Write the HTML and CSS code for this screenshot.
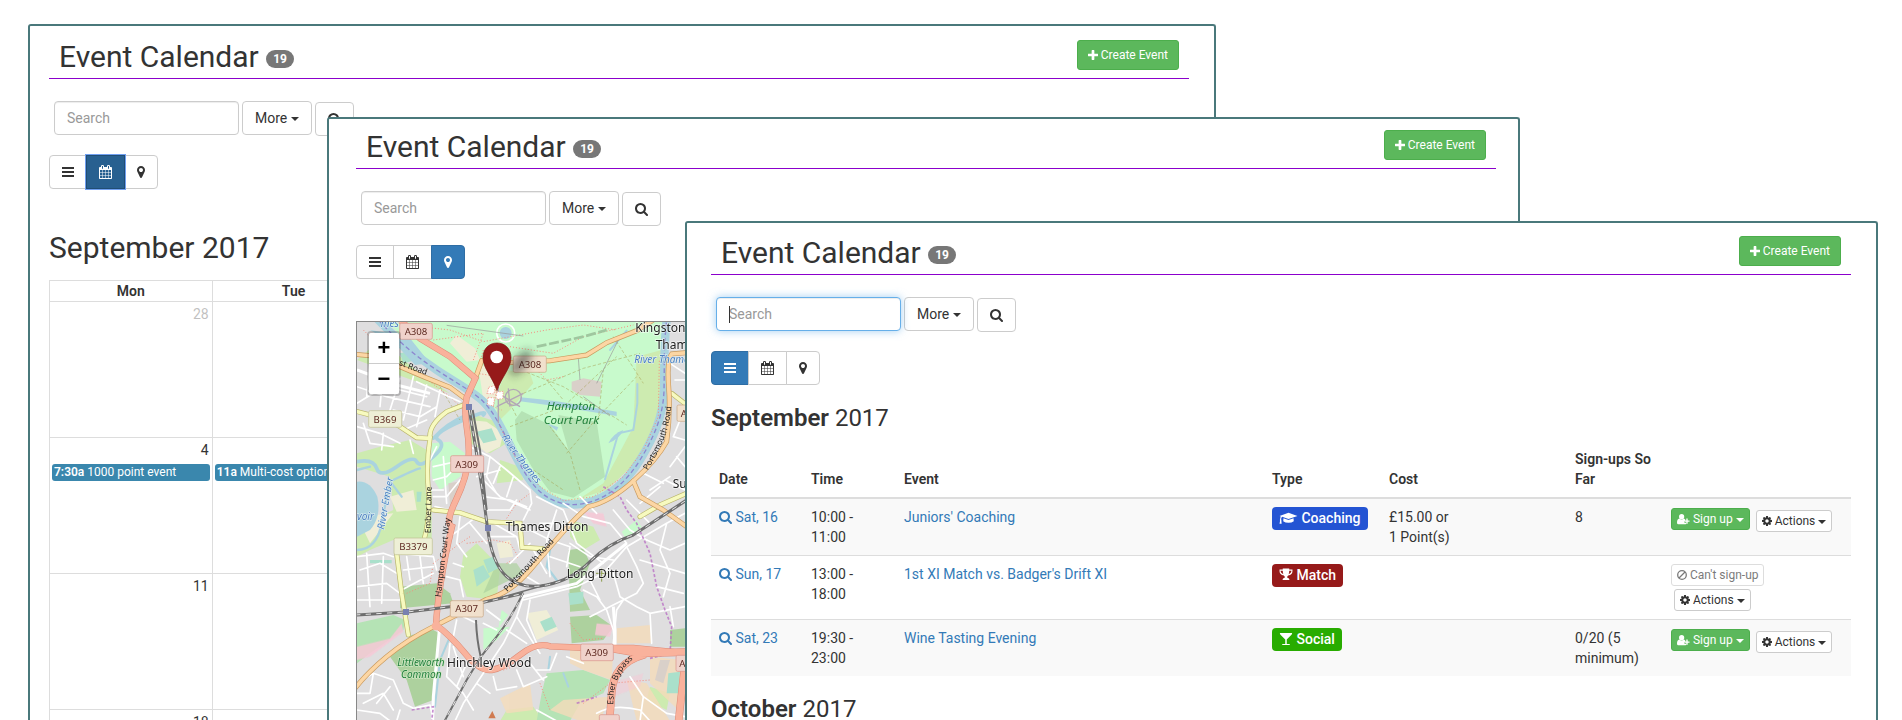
FILE: index.html
```html
<!DOCTYPE html>
<html lang="en">
<head>
<meta charset="utf-8">
<title>Event Calendar</title>
<link rel="stylesheet" href="styles.css">
</head>
<body>
<svg class="sprite" aria-hidden="true">
  <symbol id="i-search" viewBox="64 0 1664 1792"><path d="M1216 832q0-185-131.5-316.5t-316.5-131.5-316.5 131.5-131.5 316.5 131.5 316.5 316.5 131.5 316.5-131.5 131.5-316.5zm512 832q0 52-38 90t-90 38q-54 0-90-38l-343-342q-179 124-399 124-143 0-273.5-55.5t-225-150-150-225-55.5-273.5 55.5-273.5 150-225 225-150 273.5-55.5 273.5 55.5 225 150 150 225 55.5 273.5q0 220-124 399l343 343q37 37 37 90z"/></symbol>
  <symbol id="i-marker" viewBox="384 0 1024 1792"><path d="M1152 640q0-106-75-181t-181-75-181 75-75 181 75 181 181 75 181-75 75-181zm256 0q0 109-33 179l-364 774q-16 33-47.5 52t-67.5 19-67.5-19-46.5-52l-365-774q-33-70-33-179 0-212 150-362t362-150 362 150 150 362z"/></symbol>
  <symbol id="i-plus" viewBox="192 128 1408 1408"><path d="M1600 736v192q0 40-28 68t-68 28h-416v416q0 40-28 68t-68 28h-192q-40 0-68-28t-28-68v-416h-416q-40 0-68-28t-28-68v-192q0-40 28-68t68-28h416v-416q0-40 28-68t68-28h192q40 0 68 28t28 68v416h416q40 0 68 28t28 68z"/></symbol>
  <symbol id="i-bars" viewBox="0 0 12 14"><path d="M0 2h12v2H0zM0 6h12v2H0zM0 10h12v2H0z"/></symbol>
  <symbol id="i-calendar" viewBox="64 0 1664 1792"><path d="M192 1664h288v-288h-288v288zm352 0h320v-288h-320v288zm-352-352h288v-320h-288v320zm352 0h320v-320h-320v320zm-352-384h288v-288h-288v288zm736 736h320v-288h-320v288zm-384-736h320v-288h-320v288zm768 736h288v-288h-288v288zm-384-352h320v-320h-320v320zm-352-864v-288q0-13-9.5-22.5t-22.5-9.5h-64q-13 0-22.5 9.5t-9.5 22.5v288q0 13 9.5 22.5t22.5 9.5h64q13 0 22.5-9.5t9.5-22.5zm736 864h288v-320h-288v320zm-384-384h320v-288h-320v288zm384 0h288v-288h-288v288zm32-480v-288q0-13-9.5-22.5t-22.5-9.5h-64q-13 0-22.5 9.5t-9.5 22.5v288q0 13 9.5 22.5t22.5 9.5h64q13 0 22.5-9.5t9.5-22.5zm384-64v1280q0 52-38 90t-90 38h-1408q-52 0-90-38t-38-90v-1280q0-52 38-90t90-38h128v-96q0-66 47-113t113-47h64q66 0 113 47t47 113v96h384v-96q0-66 47-113t113-47h64q66 0 113 47t47 113v96h128q52 0 90 38t38 90z"/></symbol>
  <symbol id="i-cog" viewBox="128 128 1536 1536"><path d="M1152 896q0-106-75-181t-181-75-181 75-75 181 75 181 181 75 181-75 75-181zm512-109v222q0 12-8 23t-20 13l-185 28q-19 54-39 91 35 50 107 138 10 12 10 25t-9 23q-27 37-99 108t-94 71q-12 0-26-9l-138-108q-44 23-91 38-16 136-29 186-7 28-36 28h-222q-14 0-24.5-8.5t-11.5-21.5l-28-184q-49-16-90-37l-141 107q-10 9-25 9-14 0-25-11-126-114-165-168-7-10-7-23 0-12 8-23 15-21 51-66.5t54-70.5q-27-50-41-99l-183-27q-13-2-21-12.5t-8-23.5v-222q0-12 8-23t19-13l186-28q14-46 39-92-40-57-107-138-10-12-10-24 0-10 9-23 26-36 98.5-107.5t94.5-71.5q13 0 26 10l138 107q44-23 91-38 16-136 29-186 7-28 36-28h222q14 0 24.5 8.5t11.5 21.5l28 184q49 16 90 37l142-107q9-9 24-9 13 0 25 10 129 119 165 170 7 8 7 22 0 12-8 23-15 21-51 66.5t-54 70.5q26 50 41 98l183 28q13 2 21 12.5t8 23.5z"/></symbol>
  <symbol id="i-ban" viewBox="1 1 10 10"><g fill="none" stroke="currentColor" stroke-width="1.3"><circle cx="6" cy="6" r="4.3"/><path d="M3 9l6-6"/></g></symbol>
  <symbol id="i-userplus" viewBox="0 0 28 24"><circle cx="10" cy="7" r="5.6"/><path d="M5 11q5 4 10 0q2 .5 3 2.500v3h-2v3.500h4v2q-1 1.500-3 1.500H3q-3 0-3-3.500q0-8 5-9z"/><path d="M20 11h3v4h4v3h-4v4h-3v-4h-4v-3h4z"/></symbol>
  <symbol id="i-cap" viewBox="0 0 36 24"><path d="M18 2L35 8L18 14L6 9.800Q4 11 4 14.500Q5 16 4.500 17L5 23H1L2 17Q1 16 2.200 14.500Q2.300 11 3.500 9L1 8z"/><path d="M8.500 12.500L18 16L27.500 12.500L28 18Q24 21 18 21T8 18z"/></symbol>
  <symbol id="i-trophy" viewBox="0 0 26 26"><path d="M7 1h12v2h6v3q0 6-8 8q-2 1.500-2 4h1.500q3 1.500 3 4.500h-13q0-3 3-4.500H11q0-2.500-2-4q-8-2-8-8V3h6zM3 5v1q0 3 5 5.500Q7 8 7 5zM23 5h-4q0 3-1 6.500q5-2.500 5-5.500z" fill-rule="evenodd"/></symbol>
  <symbol id="i-glass" viewBox="0 0 28 26"><path d="M2 1h24q1 1.500-1 3.500L15.500 14v9H20q2 0 2 2H6q0-2 2-2h4.500v-9L3 4.500Q1 2.500 2 1z"/></symbol>
</svg>

<main class="desk">

  <section class="window window-month">
    <header class="bar">
      <h2 class="title">Event Calendar <span class="badge">19</span></h2>
      <button class="btn btn-create" type="button"><svg class="ico"><use href="#i-plus"/></svg> Create Event</button>
    </header>
    <form class="filters">
      <span class="field"><input class="search" type="text" placeholder="Search" aria-label="Search"></span>
      <button class="btn btn-default" type="button">More <span class="caret"></span></button>
      <button class="btn btn-default btn-find" type="button" aria-label="Find"><svg class="ico"><use href="#i-search"/></svg></button>
    </form>
    <div class="views">
      <button class="btn btn-default" type="button" aria-label="List"><svg class="ico ico-bars"><use href="#i-bars"/></svg></button>
      <button class="btn btn-default is-pressed" type="button" aria-label="Calendar"><svg class="ico"><use href="#i-calendar"/></svg></button>
      <button class="btn btn-default" type="button" aria-label="Map"><svg class="ico ico-pin"><use href="#i-marker"/></svg></button>
    </div>
    <h2 class="month-title">September 2017</h2>
    <table class="month">
      <thead><tr><th>Mon</th><th>Tue</th><th></th><th></th><th></th><th></th><th></th></tr></thead>
      <tbody>
        <tr><td><div class="day day-other">28</div></td><td></td><td></td><td></td><td></td><td></td><td></td></tr>
        <tr>
          <td><div class="day">4</div><a class="entry" href="#"><b>7:30a</b> 1000 point event</a></td>
          <td><div class="day">&nbsp;</div><a class="entry" href="#"><b>11a</b> Multi-cost option</a></td>
          <td></td><td></td><td></td><td></td><td></td>
        </tr>
        <tr><td><div class="day">11</div></td><td></td><td></td><td></td><td></td><td></td><td></td></tr>
        <tr><td><div class="day">18</div></td><td></td><td></td><td></td><td></td><td></td><td></td></tr>
      </tbody>
    </table>
  </section>

  <section class="window window-map">
    <header class="bar">
      <h2 class="title">Event Calendar <span class="badge">19</span></h2>
      <button class="btn btn-create" type="button"><svg class="ico"><use href="#i-plus"/></svg> Create Event</button>
    </header>
    <form class="filters">
      <span class="field"><input class="search" type="text" placeholder="Search" aria-label="Search"></span>
      <button class="btn btn-default" type="button">More <span class="caret"></span></button>
      <button class="btn btn-default btn-find" type="button" aria-label="Find"><svg class="ico"><use href="#i-search"/></svg></button>
    </form>
    <div class="views">
      <button class="btn btn-default" type="button" aria-label="List"><svg class="ico ico-bars"><use href="#i-bars"/></svg></button>
      <button class="btn btn-default" type="button" aria-label="Calendar"><svg class="ico"><use href="#i-calendar"/></svg></button>
      <button class="btn btn-default is-active" type="button" aria-label="Map"><svg class="ico ico-pin"><use href="#i-marker"/></svg></button>
    </div>
    <div class="map">
      <svg class="tiles" viewBox="21 36 984 1197" role="img" aria-label="Street map">
        <defs>
          <filter id="soft" x="-80%" y="-80%" width="260%" height="260%"><feGaussianBlur stdDeviation="12"/></filter>
          <path id="p-ports" d="M893 482C925 425 955 380 964 290"/>
          <path id="p-esher" d="M790 1184C790 1130 800 1090 846 1050"/>
          <path id="p-thames" d="M455 380C480 425 515 470 580 545"/>
          <path id="t-thames" d="M85 30C150 100 200 140 260 180S370 245 400 275S450 345 490 425S560 545 600 566S680 590 730 573S830 515 870 450S940 320 942 240S940 120 950 30"/>
          <path id="t-a309" d="M150 30L210 85L300 140L376 205L350 262Q342 300 350 350T356 440Q352 500 318 570T306 650Q284 740 272 820T258 945Q300 975 345 1030T425 1080T510 1035T600 1009L720 1014H850L1010 1030"/>
          <path id="t-a307" d="M1010 128L965 132Q950 150 956 230T950 395Q920 450 850 513T715 590Q680 620 640 665T540 780T410 868Q330 910 250 950T110 1040T15 1135"/>
          <path id="t-yellow" d="M15 303L110 328L150 350L200 383L240 385Q228 460 235 540T222 690M240 385Q235 345 290 305L345 283M140 730L155 850L175 975M250 600L330 608L410 635L510 640L516 712L580 716M965 250L1010 285M1010 550L930 585L870 620"/>
          <path id="t-orange" d="M15 133L70 138L150 170L220 200L300 232L348 268M376 205L395 152M470 158L600 152L710 135L770 98L860 62L910 30M850 513L870 560L940 600L1010 650"/>
          <path id="t-bypass" d="M780 1015L870 1030L1010 1026M880 1035Q790 1060 785 1150L778 1240M1005 1060L985 1240"/>
        </defs>
        <rect x="21" y="36" width="984" height="1197" fill="#dfdedf"/>

        <g fill="#c8facc">
          <path d="M110 36H945V260Q940 360 860 450T700 585Q620 580 560 530T440 330L345 240L250 170z"/>
          <path d="M245 400L300 395L345 430L330 500L270 540L245 500z"/>
          <path d="M400 955L480 950L440 990L400 1020zM455 900L475 915L445 955zM815 665L860 630L875 650L830 690z"/>
        </g>
        <g fill="#cdebb0">
          <path d="M860 140L935 120V290Q925 370 860 455L770 540L690 565L760 520L850 350z"/>
          <path d="M21 150L90 90L210 190L300 250L200 215z"/>
          <path d="M90 410L180 390L230 420L225 600H130L120 500L21 470V430z"/>
          <path d="M21 650L130 600L245 540V690L130 690L60 720L21 740z"/>
          <path d="M360 310L455 340L470 400L420 430L360 400z"/>
          <path d="M470 180L540 190L550 220L480 300L440 340L445 240z"/>
          <path d="M340 735L380 700L450 770L440 870L350 860L330 800z"/>
          <path d="M660 630L730 650L750 690L700 720L660 680zM450 450L510 470L520 510L440 520z"/>
          <path d="M900 1130L960 1150L950 1200L890 1170zM470 1200L550 1190L580 1233H450z"/>
        </g>
        <g fill="#b5e3b5">
          <path d="M495 330L515 303L600 345L655 420L625 315L740 335L765 500L670 563L600 545L545 470L500 390z"/>
          <path d="M590 1090L700 1080L780 1110L760 1150L690 1180L660 1233H560L575 1150z"/>
          <path d="M21 940L130 915L165 930L160 960L60 1030L21 1060z"/>
        </g>
        <g fill="#add19e">
          <path d="M120 1040L185 975L250 960L268 970L250 1170L195 1190L170 1110z"/>
          <path d="M150 830L260 820L300 850L310 880L150 895z"/>
          <path d="M660 920L740 915L790 950L760 990L665 1000zM960 960L1005 955V1010H960z"/>
          <path d="M655 720L700 715L720 760L690 840L720 900L660 905z"/>
          <path d="M400 850L520 790L500 760L440 760z" opacity=".7"/>
        </g>
        <g fill="#f5dcba" opacity=".8">
          <path d="M660 1010H790L785 1110L700 1080L660 1060zM800 955L900 945L905 1000H800z"/>
          <path d="M450 1165L540 1120L550 1200L470 1210zM640 1170L780 1160L750 1233H690L600 1200z"/>
          <path d="M900 1040L1000 1050L985 1200L900 1120zM830 1110L890 1120L960 1233H860z"/>
        </g>
        <g fill="#f0eed7">
          <path d="M300 100L320 75L375 115L390 150L350 155z"/>
          <path d="M360 330L410 335L460 370L450 410L410 430L375 400zM120 560L190 540L200 600L140 605z"/>
          <path d="M440 700L480 690L490 740L450 745zM530 910L590 900L625 960L560 990zM21 620L130 610L60 700z"/>
          <path d="M385 170L430 160L440 260L400 270z"/>
        </g>
        <g fill="#aae0cb">
          <path d="M370 780L400 765L420 800L380 830zM400 750L430 740L445 775L415 790zM655 850L700 845L700 880L660 885z"/>
          <path d="M570 935L605 920L620 950L585 965zM60 750H125V760H60zM955 1090L990 1085L985 1150H950z"/>
          <path d="M150 130L195 120L200 150L160 160zM380 365L425 355L440 390L400 400zM200 545L215 545L212 575H200z"/>
        </g>
        <g fill="#d9d0c9">
          <path d="M665 215L700 205L755 215L750 260L690 255L665 240zM295 520L325 515L320 570L300 585zM930 1050L960 1050L940 1120L915 1110z"/>
        </g>
        <g fill="#f7c8d6" opacity=".85">
          <path d="M21 1010L120 985L155 940L160 965L60 1040L21 1050zM700 605L760 610L770 650L730 640zM740 940L790 945L780 980L735 975z"/>
          <path d="M780 1120L880 1090L870 1130L790 1160z" opacity=".6"/>
        </g>

        <g fill="#aad3df">
          <path d="M100 50L180 85L240 160L195 165L130 95zM120 70L60 60L150 110z"/>
          <path d="M21 515Q60 510 82 560Q95 620 60 660L21 680z"/>
          <circle cx="467" cy="69" r="27" fill="#c8facc" stroke="#fff" stroke-width="5"/><circle cx="467" cy="69" r="18"/>
          <path d="M775 400Q790 370 820 360Q810 385 775 400zM510 262L570 268L630 275L800 305V318L630 290L510 274zM590 340L625 352L620 362z"/>
        </g>
        <g fill="none" stroke="#aad3df" stroke-linecap="round">
          <use href="#t-thames" stroke-width="25"/>
          <path d="M21 455Q70 445 80 475T140 470T200 455T250 440T265 390T330 335T400 315" stroke-width="11"/>
          <path d="M250 385Q290 340 350 315" stroke-width="10"/>
          <path d="M21 480L60 470M130 510Q190 480 210 475M120 515Q110 560 95 640T21 720M600 720L590 770L620 810M155 560L125 520" stroke-width="7"/>
          <path d="M862 222V280L850 360L805 370L765 508M830 62L780 120" stroke-width="6"/>
          <path d="M300 980L270 1050L255 1190M640 1090L655 1130M600 1040L595 1080" stroke-width="6"/>
        </g>
        <use href="#t-thames" fill="none" stroke="#8d86cf" stroke-width="4" stroke-dasharray="14 9"/>

        <g fill="none" stroke="#a59f4e" stroke-width="2" stroke-dasharray="10 6" opacity=".75">
          <path d="M500 175L640 230L790 320L830 345M520 250L700 175L870 130M480 350L640 290L800 140M650 430L745 320L860 200M690 540L660 430L600 350M550 480L640 540"/>
          <path d="M790 80L880 220M590 210L640 270M745 330L760 180M270 230L330 330M480 280L500 320"/>
        </g>
        <g fill="none" stroke="#f58a7c" stroke-width="3" stroke-dasharray="3 6">
          <path d="M210 50L300 60L400 95L590 60L700 45L800 60M250 90L400 70L370 150M400 120L380 190L450 200M480 110L610 130L700 80L850 45"/>
          <path d="M450 350L500 450L570 530L640 572L730 560L820 500L880 420L925 320L928 150"/>
          <path d="M40 60L130 150L220 200L300 260L370 330M460 640L500 580L540 550M350 700L430 690L480 700L505 740L470 760"/>
          <path d="M170 850L240 820L250 760L330 700L360 680M570 1120L600 1200M410 1060L460 1080L520 1060M660 940L700 990L760 985M700 1180L780 1120L900 1110"/>
          <path d="M560 180L590 210L640 200M410 250L440 240L430 290L455 300"/>
        </g>
        <g fill="none" stroke="#999" stroke-width="2">
          <path d="M290 46L520 78M685 145L690 210M780 318L700 260M810 80L740 220"/>
        </g>
        <path d="M560 110L700 80L770 60" fill="none" stroke="#9fc79f" stroke-width="8" stroke-dasharray="30 8"/>

        <g fill="none" stroke="#fff" stroke-width="5" stroke-linejoin="round" stroke-linecap="round">
          <path d="M21 180L80 200L150 240L230 260M60 160L50 260M100 180L90 290M150 205L120 300M190 200L160 330M230 225L200 350M21 230L110 260L240 290M21 280L70 250M130 300L210 320L260 290M270 240L255 320M200 215L330 275"/>
          <path d="M21 350L90 370L150 400M40 340L60 400M100 370L95 420M160 360L230 330M180 390L190 430M60 400L130 410"/>
          <path d="M260 410L240 450M250 470L340 450M250 510L290 500L310 480M250 560L290 560L330 510M255 590L300 600M280 440L290 580M245 540H280"/>
          <path d="M360 410L420 440L470 480L540 540L545 580L520 630M380 430L390 500L450 560L540 600M400 560L480 570L530 590M420 440L410 500L440 550M450 470L430 520M490 500L470 560M380 500L450 480M410 600H480L500 570"/>
          <path d="M21 740L100 730L130 740M30 780L90 760L140 790M21 830L110 820L150 850M50 730L60 890M100 740L95 880M21 870L150 870M150 730L250 740L260 780M160 780L250 770M170 740L180 810M210 740L220 820M155 840L250 790"/>
          <path d="M300 680L380 620M330 620L320 700L350 740M310 760L340 770M360 640L410 700M290 800L330 810L340 860M430 640L500 680L510 720M420 680H500M540 660L600 690M480 760L540 700M550 720L590 790M530 800L580 830"/>
          <path d="M560 560L640 600L680 700L760 760M620 600L590 690L600 800M640 580L700 620L780 640L830 700M690 560L740 610M660 700L720 740L790 750M600 740L690 770M600 690L660 710L650 770M570 640L620 640"/>
          <path d="M520 870L600 850L680 830L760 790L830 710L950 640L1005 610M830 710L860 770L880 820L860 850L800 880L720 920M700 840L740 860L770 900L790 960L795 1010M720 810L750 870M790 790L810 860L860 890L900 910L1005 890M950 640L930 720L960 790L940 860M890 690L960 720L1005 700M870 750L1005 790M920 830L1000 850M900 910L905 1000M960 890L970 950M790 1000L800 900L820 870"/>
          <path d="M520 860L500 920L460 1000L400 1090L340 1180L315 1233M540 870L530 930L560 1000M500 920L570 1030M470 960L530 1000M320 930L310 980M340 920L380 940M300 1000L290 1100L340 1150L370 1200M310 1010L340 1100M350 1060L320 1130M430 1100L440 1140L500 1130M380 1120L420 1150M500 1080L520 1130L590 1100M540 1060L580 1110M620 1030L600 1080L560 1080M410 900L450 930M400 940L440 960"/>
          <path d="M21 1120L70 1090L130 1110L160 1180L190 1195M40 1180L100 1150L130 1200M21 1200L90 1210L120 1233M70 1090L60 1150L21 1150M190 1195L240 1185L250 1233M120 1130L80 1180M150 1200L140 1233"/>
          <path d="M960 470L1005 410M945 510L1005 540M900 540L960 500M990 330L970 380L1005 390M960 160L1005 190M975 210H1005M980 440L1005 470M870 580L930 530M880 490L940 520M790 600L840 660L890 690M830 570L900 640"/>
          <path d="M560 1200L620 1233M840 1100L880 1160L950 1210L1005 1220M880 1160L870 1233M740 1210Q790 1180 870 1200L900 1233M650 1040L700 1060"/>
        </g>
        <g fill="none" stroke="#fff" stroke-width="9">
          <path d="M268 960L250 1160L248 1233M520 860L680 820L830 700M795 1010V960L790 890M21 180L140 225L240 250"/>
        </g>
        <g fill="none" stroke="#b970c4" stroke-width="5" stroke-dasharray="9 6" opacity=".8">
          <path d="M760 530L810 560L830 600L860 640L900 730L920 830L945 900L965 950L960 1030L900 1045M185 1200L250 1190L245 1233M680 1180L740 1160"/>
        </g>

        <g fill="none" stroke-linecap="round">
          <use href="#t-yellow" stroke="#b9b56a" stroke-width="15"/>
          <use href="#t-yellow" stroke="#f7fabf" stroke-width="11"/>
          <g stroke="#c99a5e" stroke-width="15"><use href="#t-a307"/><use href="#t-orange"/></g>
          <g stroke="#fcd6a4" stroke-width="11"><use href="#t-a307"/><use href="#t-orange"/></g>
          <g stroke="#dd8a76"><use href="#t-a309" stroke-width="19"/><use href="#t-bypass" stroke-width="23"/></g>
          <g stroke="#f9b29c"><use href="#t-a309" stroke-width="16"/><use href="#t-bypass" stroke-width="20"/></g>
        </g>
        <circle cx="258" cy="948" r="13" fill="#f9b29c"/>

        <g fill="none" stroke="#6e6e6e">
          <path d="M358 300L378 420L400 560L412 650Q425 760 470 800T590 825T720 755T850 675L1010 570M15 915L180 905L300 890L400 877L520 850" stroke-width="9"/>
          <path d="M368 300L390 420L410 600M520 848Q480 930 440 980T390 1045L350 1110L280 1240M378 930Q380 990 392 1040" stroke-width="6"/>
          <path d="M400 877L640 810" stroke-width="4"/>
        </g>
        <g fill="none" stroke="#e6e6e6" stroke-width="3" stroke-dasharray="16 16">
          <path d="M358 300L378 420L400 560L412 650Q425 760 470 800T590 825T720 755T850 675L1010 570M15 915L180 905L300 890L400 877L520 850M520 848Q480 930 440 980T390 1045L350 1110L280 1240"/>
        </g>
        <g fill="#7981b0">
          <path d="M348 282h18v18h-18zM405 645h18v18h-18zM159 897h18v18h-18z"/>
        </g>
        <g fill="none" stroke="#b2a6b6" stroke-width="4">
          <circle cx="490" cy="262" r="24"/><path d="M440 290L520 250M445 250L510 290M475 235L480 290M445 230V340"/>
        </g>
        <g fill="#fff" stroke="#f2a497" stroke-width="3" stroke-dasharray="4 4">
          <path d="M416 232L436 226L432 252L412 250zM440 246L460 244L458 266L438 268zM414 262L434 264L430 288L412 284z"/>
        </g>
        <path d="M415 1225l12-22l10 22z" fill="#d07a50"/>
        <path d="M755 775v40M738 790h34" stroke="#8a9a4a" stroke-width="3"/>

        <g stroke-width="2">
          <g fill="#f0d2cb" stroke="#d9938a"><rect x="149" y="40" width="98" height="48" rx="5"/><rect x="302" y="437" width="99" height="50" rx="5"/><rect x="692" y="1002" width="98" height="50" rx="5"/><rect x="978" y="1036" width="98" height="48" rx="5"/><rect x="748" y="1214" width="60" height="48" rx="5"/></g>
          <g fill="#f1e0cc" stroke="#c9a684"><rect x="490" y="138" width="99" height="49" rx="5"/><rect x="301" y="872" width="99" height="49" rx="5"/><rect x="981" y="285" width="98" height="49" rx="5"/></g>
          <g fill="#eeefd6" stroke="#bfc092"><rect x="56" y="302" width="99" height="50" rx="5"/><rect x="132" y="684" width="115" height="50" rx="5"/></g>
        </g>
        <g class="shield-text">
          <text x="198" y="76">A308</text><text x="540" y="173">A308</text><text x="350" y="473">A309</text><text x="350" y="907">A307</text><text x="740" y="1037">A309</text>
          <text x="105" y="338">B369</text><text x="190" y="720">B3379</text><text x="1026" y="320">A307</text><text x="1022" y="1070">A309</text>
        </g>
        <g class="place">
          <text x="856" y="66">Kingston</text><text x="917" y="117">Thames</text>
          <text x="467" y="662">Thames Ditton</text><text x="650" y="803">Long Ditton</text><text x="291" y="1072">Hinchley Wood</text><text x="968" y="535">Surbiton</text>
        </g>
        <g class="green">
          <text x="663" y="300">Hampton</text><text x="664" y="343">Court Park</text>
          <g class="green-sm"><text x="213" y="1067">Littleworth</text><text x="214" y="1104">Common</text></g>
        </g>
        <g class="water">
          <text x="853" y="160">River Thames</text><text x="92" y="52">mes</text><text x="21" y="630">voir</text>
          <text><textPath href="#p-thames">River Thames</textPath></text>
          <text transform="translate(102 660) rotate(-80)">River Ember</text>
        </g>
        <g class="road">
          <text><textPath href="#p-ports">Portsmouth Road</textPath></text>
          <text><textPath href="#p-esher">Esher Bypass</textPath></text>
          <text transform="translate(472 846) rotate(-47)">Portsmouth Road</text>
          <text transform="translate(272 862) rotate(-83)">Hampton Court Way</text>
          <text transform="translate(242 670) rotate(-89)">Ember Lane</text>
          <text transform="translate(146 165) rotate(20)">st Road</text>
        </g>

        <ellipse cx="512" cy="158" rx="46" ry="20" transform="rotate(-50 512 158)" fill="#222" opacity=".5" filter="url(#soft)"/>
        <path d="M441 99C465 99 483 116 483 143C483 175 455 200 441 242C427 200 399 175 399 143C399 116 417 99 441 99z" fill="#961a1a" stroke="#7d1414" stroke-width="2"/>
        <circle cx="440" cy="141" r="19" fill="#fff"/>
      </svg>
      <div class="zoom">
        <button class="zoom-btn" type="button" aria-label="Zoom in">+</button>
        <button class="zoom-btn" type="button" aria-label="Zoom out">−</button>
      </div>
    </div>
  </section>

  <section class="window window-list">
    <header class="bar">
      <h2 class="title">Event Calendar <span class="badge">19</span></h2>
      <button class="btn btn-create" type="button"><svg class="ico"><use href="#i-plus"/></svg> Create Event</button>
    </header>
    <form class="filters">
      <span class="field has-cursor"><input class="search is-focus" type="text" placeholder="Search" aria-label="Search"></span>
      <button class="btn btn-default" type="button">More <span class="caret"></span></button>
      <button class="btn btn-default btn-find" type="button" aria-label="Find"><svg class="ico"><use href="#i-search"/></svg></button>
    </form>
    <div class="views">
      <button class="btn btn-default is-active" type="button" aria-label="List"><svg class="ico ico-bars"><use href="#i-bars"/></svg></button>
      <button class="btn btn-default" type="button" aria-label="Calendar"><svg class="ico"><use href="#i-calendar"/></svg></button>
      <button class="btn btn-default" type="button" aria-label="Map"><svg class="ico ico-pin"><use href="#i-marker"/></svg></button>
    </div>
    <h3 class="group"><b>September</b> 2017</h3>
    <table class="events">
      <colgroup><col class="c-date"><col class="c-time"><col><col class="c-type"><col class="c-cost"><col class="c-count"><col class="c-act"></colgroup>
      <thead>
        <tr><th>Date</th><th>Time</th><th>Event</th><th>Type</th><th>Cost</th><th>Sign-ups So Far</th><th></th></tr>
      </thead>
      <tbody>
        <tr>
          <td><a href="#"><svg class="ico"><use href="#i-search"/></svg> Sat, 16</a></td>
          <td>10:00 -<br>11:00</td>
          <td><a href="#">Juniors' Coaching</a></td>
          <td><span class="tag tag-coaching"><svg class="ico ico-wide"><use href="#i-cap"/></svg> Coaching</span></td>
          <td>£15.00 or<br>1 Point(s)</td>
          <td>8</td>
          <td><div class="acts"><button class="btn btn-xs btn-signup" type="button"><svg class="ico ico-user"><use href="#i-userplus"/></svg> Sign up <span class="caret"></span></button><button class="btn btn-xs btn-default btn-actions" type="button"><svg class="ico"><use href="#i-cog"/></svg> Actions <span class="caret"></span></button></div></td>
        </tr>
        <tr>
          <td><a href="#"><svg class="ico"><use href="#i-search"/></svg> Sun, 17</a></td>
          <td>13:00 -<br>18:00</td>
          <td><a href="#">1st XI Match vs. Badger's Drift XI</a></td>
          <td><span class="tag tag-match"><svg class="ico"><use href="#i-trophy"/></svg> Match</span></td>
          <td></td>
          <td></td>
          <td><div class="acts"><button class="btn btn-xs btn-default" type="button" disabled><svg class="ico"><use href="#i-ban"/></svg> Can't sign-up</button><button class="btn btn-xs btn-default btn-actions" type="button"><svg class="ico"><use href="#i-cog"/></svg> Actions <span class="caret"></span></button></div></td>
        </tr>
        <tr>
          <td><a href="#"><svg class="ico"><use href="#i-search"/></svg> Sat, 23</a></td>
          <td>19:30 -<br>23:00</td>
          <td><a href="#">Wine Tasting Evening</a></td>
          <td><span class="tag tag-social"><svg class="ico"><use href="#i-glass"/></svg> Social</span></td>
          <td></td>
          <td>0/20 (5 minimum)</td>
          <td><div class="acts"><button class="btn btn-xs btn-signup" type="button"><svg class="ico ico-user"><use href="#i-userplus"/></svg> Sign up <span class="caret"></span></button><button class="btn btn-xs btn-default btn-actions" type="button"><svg class="ico"><use href="#i-cog"/></svg> Actions <span class="caret"></span></button></div></td>
        </tr>
      </tbody>
    </table>
    <h3 class="group"><b>October</b> 2017</h3>
  </section>

</main>
</body>
</html>
```
FILE: styles.css
```css
* { box-sizing: border-box; }

body {
  margin: 0;
  background: #fff;
  color: #333;
  font-family: Roboto, "Liberation Sans", sans-serif;
  font-size: 14px;
  line-height: 20px;
}

.sprite { display: none; }

a { color: #337ab7; text-decoration: none; }
b, th { font-weight: 600; }

/* Overlapping windows */
.desk {
  position: relative;
  height: 100vh;
  overflow: hidden;
}

.window {
  position: absolute;
  bottom: 0;
  overflow: hidden;
  background: #fff;
  border: 2px solid #4a787b;
  border-bottom: 0;
  border-radius: 3px 3px 0 0;
}

.window-month { top: 24px; left: 28px; right: 686px; padding: 14px 25px 0 19px; }
.window-map { top: 117px; left: 327px; right: 382px; padding: 11px 22px 0 27px; }
.window-list { top: 221px; left: 685px; right: 24px; padding: 13px 25px 0 24px; }

/* Header */
.bar {
  display: flex;
  justify-content: space-between;
  align-items: flex-start;
  height: 39px;
  padding: 0 10px;
  border-bottom: 1px solid #8b00cc;
}

.title, .month-title {
  margin: 0;
  font-size: 30px;
  font-weight: 400;
  line-height: 33px;
}

.badge {
  display: inline-block;
  padding: 3px 7px;
  border-radius: 10px;
  background: #777;
  color: #fff;
  font-size: 12px;
  font-weight: 700;
  line-height: 12px;
  vertical-align: middle;
}

/* Icons and buttons */
.ico {
  width: 13px;
  height: 14px;
  fill: currentColor;
  vertical-align: -2px;
}

.ico-bars { width: 12px; }
.ico-pin { width: 8px; }

.caret {
  display: inline-block;
  border: 4px solid transparent;
  border-top-color: currentColor;
  border-bottom: 0;
  vertical-align: middle;
}

.btn {
  padding: 6px 12px;
  border: 1px solid #ccc;
  border-radius: 4px;
  background: #fff;
  color: #333;
  font: inherit;
  white-space: nowrap;
}

.btn-create {
  padding: 5px 10px;
  border-color: #4cae4c;
  border-radius: 3px;
  background: #5cb85c;
  color: #fff;
  font-size: 12px;
  line-height: 18px;
}

.btn-create .ico, .btn-xs .ico { width: 10px; height: 12px; }

.btn-xs {
  padding: 1px 5px;
  border-radius: 3px;
  font-size: 12px;
  line-height: 18px;
}

.btn-xs:disabled { opacity: .65; }

.btn-signup {
  margin-top: 1px;
  border-color: #4cae4c;
  background: #5cb85c;
  color: #fff;
}

.btn-xs .ico-user { width: 13px; }
.btn-actions { margin: 3px 0 0 3px; }

/* Filter form */
.filters {
  display: flex;
  align-items: flex-start;
  gap: 3px;
  margin: 22px 5px 19px;
}

.field { position: relative; height: 34px; }

.search {
  width: 185px;
  height: 34px;
  padding: 6px 12px;
  border: 1px solid #ccc;
  border-radius: 4px;
  box-shadow: inset 0 1px 1px rgba(0, 0, 0, .075);
  color: #555;
  font: inherit;
}

.search::placeholder { color: #999; opacity: 1; }

.is-focus {
  border-color: #66afe9;
  box-shadow: inset 0 1px 1px rgba(0, 0, 0, .075), 0 0 8px rgba(102, 175, 233, .6);
}

.has-cursor::after {
  content: "";
  position: absolute;
  top: 9px;
  left: 13px;
  width: 1px;
  height: 17px;
  background: #333;
}

.btn-find { margin-top: 1px; }

/* View switch */
.views { display: flex; margin-bottom: 20px; }
.views .btn { height: 34px; margin-left: -1px; border-radius: 0; }
.views .btn:first-child { margin-left: 0; border-radius: 4px 0 0 4px; }
.views .btn:last-child { border-radius: 0 4px 4px 0; }
.views .is-active { border-color: #2e6da4; background: #337ab7; color: #fff; }
.views .is-pressed {
  z-index: 1;
  border-color: #204d74;
  background: #286090;
  color: #fff;
  outline: 1px solid #6f9ff0;
  outline-offset: 0;
}

/* Month grid */
.month-title { margin: 42px 0 16px; }

.month {
  width: 100%;
  border-collapse: collapse;
  table-layout: fixed;
}

.month th, .month td { padding: 0; border: 1px solid #ddd; vertical-align: top; }
.month th { height: 21px; }
.month td { height: 136px; }
.day { padding: 2px 3px 0; margin-bottom: 4px; text-align: right; }
.day-other { opacity: .3; }

.entry {
  display: block;
  margin: 0 2px;
  padding: 0 2px;
  overflow: hidden;
  border-radius: 3px;
  background: #3a87ad;
  color: #fff;
  font-size: 12px;
  line-height: 17px;
  white-space: nowrap;
}

/* Map */
.map {
  position: relative;
  height: 600px;
  margin-top: 42px;
  overflow: hidden;
  border: 1px solid #888;
  background: #dfdedf;
}

.tiles { display: block; width: 328px; height: 399px; }

.zoom {
  position: absolute;
  top: 9px;
  left: 10px;
  display: flex;
  flex-direction: column;
  border: 2px solid rgba(0, 0, 0, .2);
  border-radius: 4px;
  background-clip: padding-box;
}

.zoom-btn {
  width: 30px;
  height: 30px;
  padding: 0;
  border: 0;
  border-radius: 0 0 2px 2px;
  background: #fff;
  color: #000;
  font: bold 22px/30px "Liberation Sans", sans-serif;
}

.zoom-btn:first-child { height: 31px; border-bottom: 1px solid #ccc; border-radius: 2px 2px 0 0; }

.tiles text { font-family: "Noto Sans", sans-serif; }
.shield-text text { fill: #5e2a22; font-size: 29px; text-anchor: middle; }
.place text { fill: #222; stroke: #fff; stroke-width: 5px; stroke-opacity: .6; paint-order: stroke; font-size: 36px; }
.green text { fill: #22803c; font-size: 35px; font-style: italic; text-anchor: middle; }
.green .green-sm text { font-size: 30px; stroke: #cfe8c4; stroke-width: 4px; paint-order: stroke; }
.water text { fill: #4a7fc0; font-size: 30px; font-style: italic; stroke: #e6f2f5; stroke-width: 3px; paint-order: stroke; }
.road text { fill: #222; font-size: 25px; }

/* Event list */
.group { margin: 20px 0 10px; font-size: 24px; font-weight: 400; line-height: 26px; }

.events {
  width: 100%;
  border-collapse: collapse;
  table-layout: fixed;
}

.c-date { width: 92px; }
.c-time { width: 93px; }
.c-type { width: 117px; }
.c-cost { width: 186px; }
.c-count { width: 96px; }
.c-act { width: 188px; }

.events th { padding: 8px; border-bottom: 2px solid #ddd; text-align: left; vertical-align: bottom; }
.events td { padding: 8px; border-top: 1px solid #ddd; vertical-align: top; }
.events tbody tr:nth-child(odd) { background: #f9f9f9; }

.tag {
  display: inline-block;
  padding: 0 7px;
  border-radius: 4px;
  color: #fff;
  font-weight: 500;
  line-height: 23px;
  vertical-align: top;
}

.tag .ico { width: 14px; }
.tag .ico-wide { width: 19px; }
.tag-coaching { background: #2454d3; }
.tag-match { background: #961a1a; }
.tag-social { background: #28ac00; }

.acts { display: flex; flex-wrap: wrap; align-items: flex-start; column-gap: 3px; }
```
